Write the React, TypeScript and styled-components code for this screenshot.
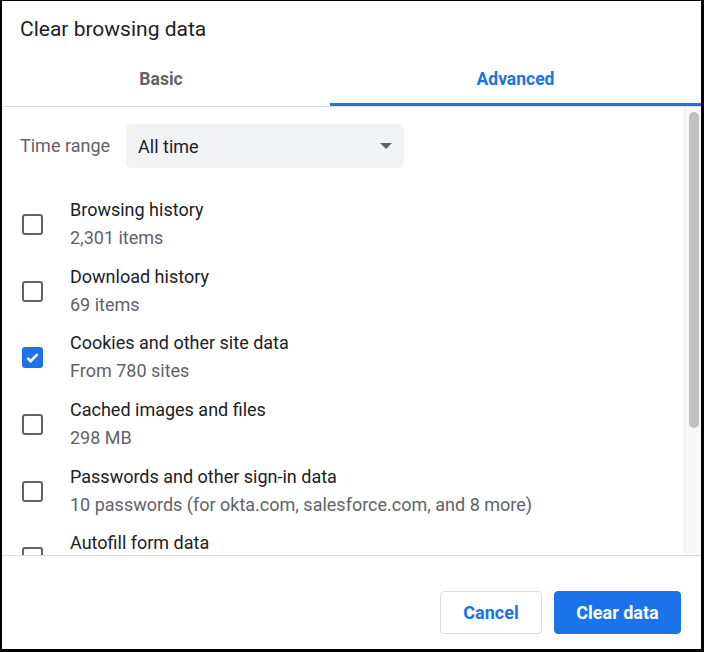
import React from 'react';
import styled, { createGlobalStyle, css } from 'styled-components';

const GlobalStyle = createGlobalStyle`
  html, body {
    margin: 0;
    padding: 0;
    background: #ffffff;
  }

  body {
    font-family: Roboto, 'Liberation Sans', Arial, sans-serif;
    -webkit-font-smoothing: antialiased;
  }
`;

const Frame = styled.div`
  position: relative;
  box-sizing: border-box;
  width: 704px;
  height: 652px;
  border-style: solid;
  border-color: #000000;
  border-width: 1px 3px 3px 2px;
  background: #ffffff;
  display: flex;
  flex-direction: column;
  overflow: hidden;

  /* the left edge of the window frame breaks off beside the cached images row */
  &::before {
    content: '';
    position: absolute;
    left: -2px;
    top: 392px;
    width: 2px;
    height: 60px;
    background: #ffffff;
  }
`;

const Title = styled.h1`
  margin: 0;
  padding: 16px 18px 0;
  font-size: 21px;
  line-height: 24px;
  font-weight: 400;
  color: #202124;
`;

const Tabs = styled.div`
  display: flex;
  border-bottom: 1px solid #dadce0;
`;

const Tab = styled.div<{ $active?: boolean; $width?: number }>`
  position: relative;
  box-sizing: border-box;
  height: 65px;
  padding-top: 27px;
  font-size: 17.5px;
  line-height: 22px;
  font-weight: 700;
  text-align: center;
  color: ${(props) => (props.$active ? '#1a73e8' : '#5f6368')};
  ${(props) =>
    props.$width
      ? css`
          width: ${props.$width}px;
          padding-right: 10px;
        `
      : css`
          flex: 1;
        `}

  ${(props) =>
    props.$active &&
    css`
      &::after {
        content: '';
        position: absolute;
        left: 0;
        right: 0;
        bottom: 0;
        height: 3px;
        background: #1a73e8;
      }
    `}
`;

const Body = styled.div`
  flex: 1;
  display: flex;
  min-height: 0;
`;

const List = styled.div`
  flex: 1;
  overflow: hidden;
  padding: 17px 0 0 18px;
`;

const ScrollTrack = styled.div`
  width: 16px;
  background: #f8f8f8;
  border-left: 1px solid #ececec;
  padding-top: 5px;
`;

const ScrollThumb = styled.div`
  width: 10px;
  height: 316px;
  margin-left: 4px;
  border-radius: 5px;
  background: #c1c1c1;
`;

const RangeRow = styled.div`
  display: flex;
  align-items: center;
  gap: 16px;
  margin-bottom: 23px;
`;

const Label = styled.span`
  font-size: 18px;
  line-height: 22px;
  color: #5f6368;
`;

const Select = styled.div`
  box-sizing: border-box;
  width: 278px;
  height: 44px;
  padding: 0 12px;
  border-radius: 5px;
  background: #f1f3f4;
  display: flex;
  align-items: center;
  justify-content: space-between;
  font-size: 18px;
  color: #202124;
`;

const Row = styled.div`
  display: flex;
  align-items: flex-start;
  padding: 7.3px 0;
`;

const Box = styled.div<{ $checked?: boolean }>`
  box-sizing: border-box;
  flex: none;
  width: 21px;
  height: 21px;
  margin: 16px 27px 0 2px;
  border-radius: 3px;
  border: 2px solid ${(props) => (props.$checked ? '#1a73e8' : '#5f6368')};
  background: ${(props) => (props.$checked ? '#1a73e8' : 'transparent')};
  display: flex;
  align-items: center;
  justify-content: center;
`;

const Texts = styled.div`
  display: flex;
  flex-direction: column;
  gap: 4px;
`;

const ItemTitle = styled.div`
  font-size: 18px;
  line-height: 24px;
  color: #202124;
`;

const ItemDetail = styled.div`
  font-size: 18px;
  line-height: 24px;
  color: #5f6368;
`;

const Footer = styled.div`
  height: 94px;
  box-sizing: border-box;
  border-top: 1px solid #dadce0;
  padding: 35px 20px 0;
  display: flex;
  justify-content: flex-end;
  align-items: flex-start;
  gap: 12px;
`;

const Button = styled.button<{ $primary?: boolean }>`
  box-sizing: border-box;
  height: 43px;
  border-radius: 4px;
  font-family: inherit;
  font-size: 18px;
  font-weight: 700;
  cursor: pointer;
  ${(props) =>
    props.$primary
      ? css`
          width: 127px;
          border: 1px solid #1a73e8;
          background: #1a73e8;
          color: #ffffff;
        `
      : css`
          width: 102px;
          border: 1px solid #dadce0;
          background: #ffffff;
          color: #1a73e8;
        `}
`;

type Item = { title: string; detail?: string; checked: boolean };

const items: Item[] = [
  { title: 'Browsing history', detail: '2,301 items', checked: false },
  { title: 'Download history', detail: '69 items', checked: false },
  { title: 'Cookies and other site data', detail: 'From 780 sites', checked: true },
  { title: 'Cached images and files', detail: '298 MB', checked: false },
  {
    title: 'Passwords and other sign-in data',
    detail: '10 passwords (for okta.com, salesforce.com, and 8 more)',
    checked: false,
  },
  { title: 'Autofill form data', checked: false },
];

const Check = () => (
  <svg width="15" height="15" viewBox="0 0 14 14">
    <path d="M2.2 7.4l3 3 6.6-6.6" fill="none" stroke="#ffffff" strokeWidth="2.4" />
  </svg>
);

const Caret = () => (
  <svg width="12" height="6" viewBox="0 0 12 6">
    <path d="M0 0h12L6 6z" fill="#5f6368" />
  </svg>
);

export default function App() {
  return (
    <>
      <GlobalStyle />
      <Frame>
        <Title>Clear browsing data</Title>
        <Tabs>
          <Tab $width={328}>Basic</Tab>
          <Tab $active>Advanced</Tab>
        </Tabs>
        <Body>
          <List>
            <RangeRow>
              <Label>Time range</Label>
              <Select>
                <span>All time</span>
                <Caret />
              </Select>
            </RangeRow>
            {items.map((item) => (
              <Row key={item.title}>
                <Box $checked={item.checked}>{item.checked && <Check />}</Box>
                <Texts>
                  <ItemTitle>{item.title}</ItemTitle>
                  {item.detail && <ItemDetail>{item.detail}</ItemDetail>}
                </Texts>
              </Row>
            ))}
          </List>
          <ScrollTrack>
            <ScrollThumb />
          </ScrollTrack>
        </Body>
        <Footer>
          <Button>Cancel</Button>
          <Button $primary>Clear data</Button>
        </Footer>
      </Frame>
    </>
  );
}
